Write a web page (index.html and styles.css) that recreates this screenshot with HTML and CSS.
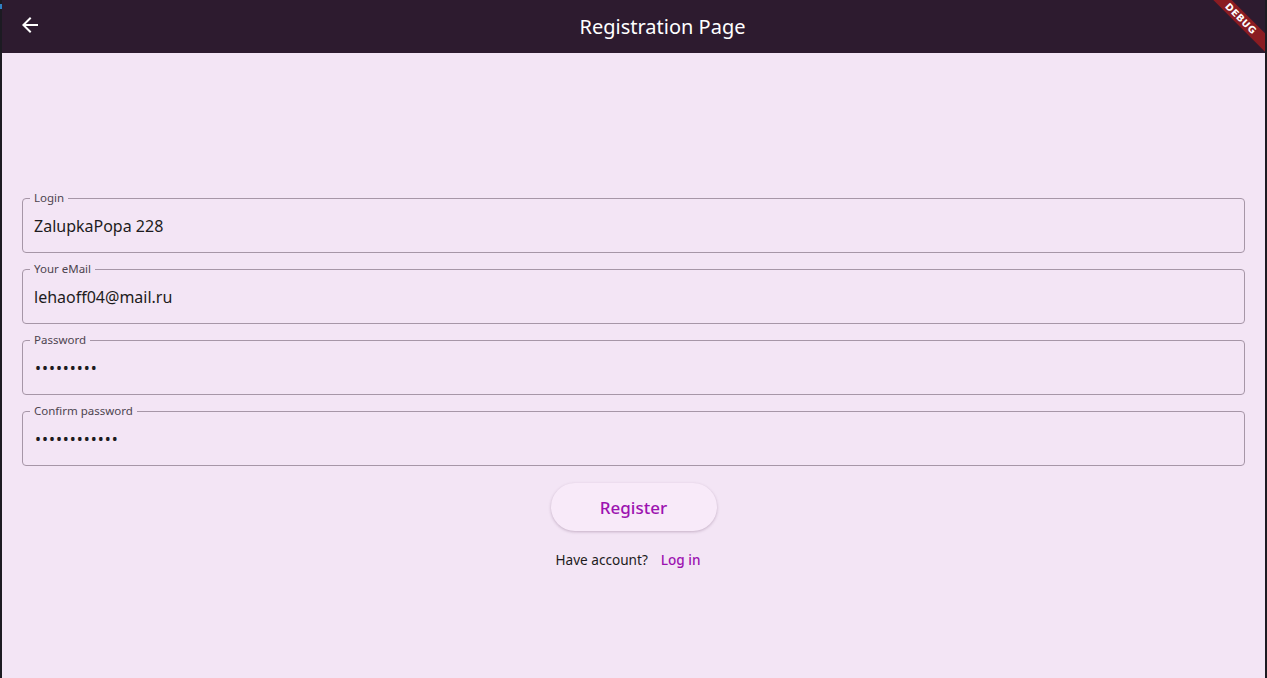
FILE: index.html
```html
<!DOCTYPE html>
<html lang="en">
<head>
<meta charset="utf-8">
<title>Registration Page</title>
<link rel="stylesheet" href="styles.css">
</head>
<body>
<div class="window">
  <div class="edge edge-left"><span class="edge-mark"></span></div>
  <div class="app">
    <header class="appbar">
      <button class="back" aria-label="Back">
        <svg width="24" height="24" viewBox="0 0 24 24"><path fill="#ffffff" d="M20 11H7.83l5.59-5.59L12 4l-8 8 8 8 1.41-1.41L7.83 13H20v-2z"/></svg>
      </button>
      <h1 class="title">Registration Page</h1>
      <div class="spacer"></div>
    </header>
    <main class="content">
      <form class="form">
        <fieldset class="field">
          <legend class="label">Login</legend>
          <div class="value">ZalupkaPopa 228</div>
        </fieldset>
        <fieldset class="field">
          <legend class="label">Your eMail</legend>
          <div class="value">lehaoff04@mail.ru</div>
        </fieldset>
        <fieldset class="field">
          <legend class="label">Password</legend>
          <div class="value dots">•••••••••</div>
        </fieldset>
        <fieldset class="field">
          <legend class="label">Confirm password</legend>
          <div class="value dots">••••••••••••</div>
        </fieldset>
        <div class="actions">
          <button type="button" class="register">Register</button>
          <p class="login-line">Have account?<a class="login-link" href="#">Log in</a></p>
        </div>
      </form>
    </main>
    <div class="banner-box"><div class="banner">DEBUG</div></div>
  </div>
  <div class="edge edge-right"></div>
</div>
</body>
</html>
```

FILE: styles.css
```css
* { box-sizing: border-box; }
html, body { margin: 0; padding: 0; height: 100%; }
body {
  font-family: "Noto Sans", "Open Sans", sans-serif;
  background: #1e1e24;
}
.window {
  display: flex;
  width: 1267px;
  height: 678px;
  overflow: hidden;
}
.edge {
  width: 2px;
  background: #1c1b22;
  flex: none;
  display: flex;
  flex-direction: column;
}
.edge-mark {
  display: block;
  margin-top: 4px;
  height: 5px;
  background: #2f7fc4;
}
.app {
  flex: 1;
  position: relative;
  display: flex;
  flex-direction: column;
  background: #f3e5f5;
  overflow: hidden;
}
.appbar {
  height: 53px;
  flex: none;
  background: #2d1b2f;
  display: flex;
  align-items: center;
  padding: 0 16px;
}
.back {
  width: 24px;
  height: 24px;
  padding: 0;
  margin: 0 0 3px 0;
  border: 0;
  background: none;
  display: flex;
}
.title {
  flex: 1;
  margin: 0;
  padding-left: 58px;
  text-align: center;
  color: #ffffff;
  font-size: 20px;
  font-weight: 400;
  line-height: 24px;
}
.spacer { width: 24px; }
.content {
  flex: 1;
  padding: 138px 20px 0 20px;
}
.form {
  display: flex;
  flex-direction: column;
  gap: 9px;
}
.field {
  margin: 0;
  min-width: 0;
  border: 1px solid #a696a7;
  border-radius: 4px;
  padding: 0 11px 0 11px;
}
.label {
  padding: 0 4px;
  margin-left: -4px;
  font-size: 11.5px;
  line-height: 14px;
  color: #4d444f;
}
.value {
  height: 47px;
  padding: 0 0 5px 0;
  display: flex;
  align-items: center;
  font-size: 16px;
  color: #1d1b20;
}
.dots {
  letter-spacing: 0.95px;
  font-size: 16px;
  padding-left: 1px;
}
.actions {
  display: flex;
  flex-direction: column;
  align-items: center;
  margin-top: 8px;
}
.register {
  width: 166px;
  height: 48px;
  border: 0;
  border-radius: 24px;
  background: #f8eaf9;
  color: #9c12b0;
  font-family: inherit;
  font-size: 17px;
  font-weight: 500;
  box-shadow: 0 1px 3px rgba(80, 40, 80, 0.28);
}
.login-line {
  margin: 19px 0 0 0;
  padding-right: 11px;
  font-size: 13.6px;
  line-height: 20px;
  color: #1d1b20;
}
.login-link {
  margin-left: 13px;
  color: #9c12b0;
  font-weight: 500;
  text-decoration: none;
}
.banner-box {
  position: absolute;
  top: 0;
  right: -2px;
  width: 64px;
  height: 64px;
  overflow: hidden;
  pointer-events: none;
}
.banner {
  position: absolute;
  left: -22.5px;
  top: 12px;
  width: 120px;
  height: 13px;
  transform: rotate(45deg);
  background: #8a1c22;
  color: #ffffff;
  font-family: "DejaVu Sans", sans-serif;
  font-size: 9.5px;
  font-weight: 700;
  line-height: 13px;
  text-align: center;
  letter-spacing: 0.5px;
}
```
